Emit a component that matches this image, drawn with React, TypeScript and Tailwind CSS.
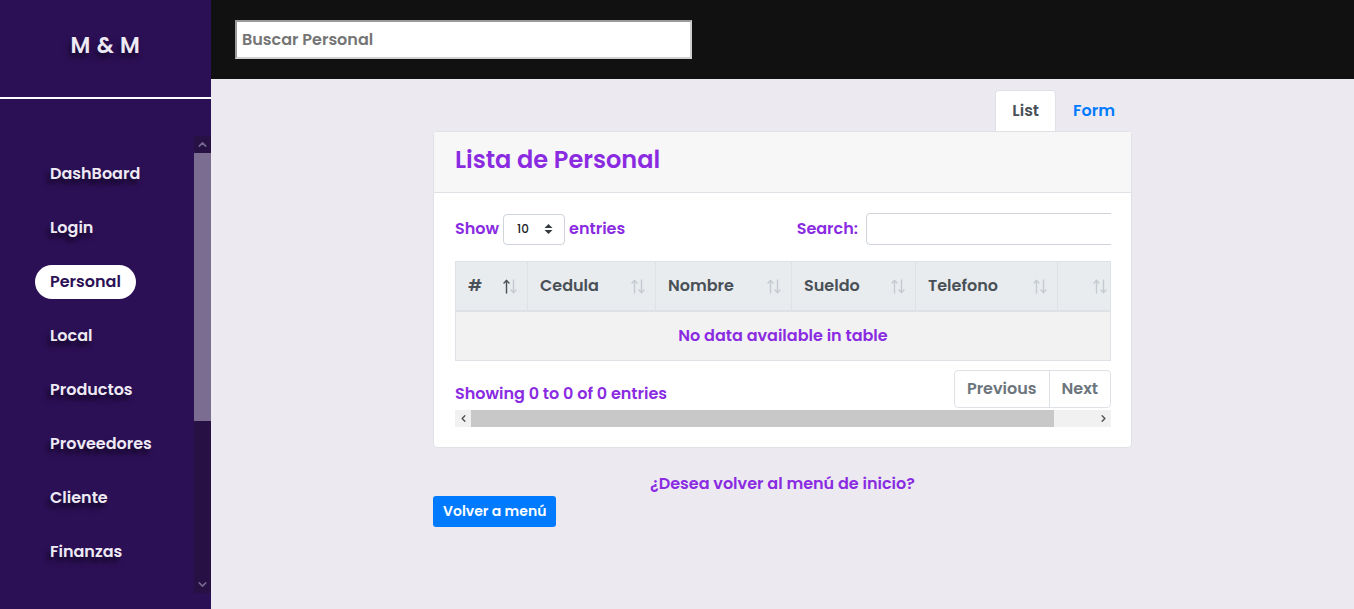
import { ChevronUp, ChevronDown, ChevronLeft, ChevronRight } from "lucide-react"

const font = "font-['Poppins','Open_Sans',sans-serif]"

const navItems = ["DashBoard", "Login", "Personal", "Local", "Productos", "Proveedores", "Cliente", "Finanzas"]

const columns = [
    { label: "#", w: "w-[72px]", active: true },
    { label: "Cedula", w: "w-[128px]" },
    { label: "Nombre", w: "w-[136px]" },
    { label: "Sueldo", w: "w-[124px]" },
    { label: "Telefono", w: "w-[142px]" },
    { label: "", w: "w-[60px]" },
]

// datatables style sort arrows
const SortIcon = ({ active }: { active?: boolean }) => (
    <svg width="14" height="15" viewBox="0 0 14 15" fill="none" strokeWidth="1.4" strokeLinecap="round">
        <g stroke={active ? "#495057" : "#c5cad0"}>
            <path d="M3.5 14V1.5" />
            <path d="M1 4L3.5 1.5L6 4" />
        </g>
        <g stroke="#c5cad0">
            <path d="M10.5 1V13.5" />
            <path d="M8 11L10.5 13.5L13 11" />
        </g>
    </svg>
)

const Sidebar = () => (
    <aside className="flex w-[211px] shrink-0 flex-col bg-[#2c1056]">
        <div className="flex h-[97px] items-center justify-center pb-[6px]">
            <span className="text-[22px] font-semibold tracking-wide text-[#eeeaf4] [text-shadow:-2px_5px_6px_rgba(0,0,0,0.55)]">
                M &amp; M
            </span>
        </div>
        <div className="h-[2px] bg-white" />
        <div className="flex flex-1 pt-[37px] pb-[16px]">
            <ul className="flex flex-1 flex-col gap-[20px] pt-[21px] pl-[35px]">
                {navItems.map((item) => (
                    <li key={item} className="flex h-[34px] items-center">
                        {item === "Personal" ? (
                            <span className="rounded-full bg-white px-[15px] py-[5px] text-[16px] font-semibold text-[#2c1056]">
                                {item}
                            </span>
                        ) : (
                            <span className="px-[15px] text-[16px] font-semibold text-[#eeeaf4] [text-shadow:-3px_5px_5px_rgba(0,0,0,0.6)]">
                                {item}
                            </span>
                        )}
                    </li>
                ))}
            </ul>
            <div className="flex w-[17px] flex-col bg-[#261044]">
                <div className="flex h-[17px] items-center justify-center">
                    <ChevronUp size={13} strokeWidth={3} className="text-[#76678f]" />
                </div>
                <div className="h-[268px] bg-[#7b6c92]" />
                <div className="flex-1" />
                <div className="flex h-[17px] items-center justify-center">
                    <ChevronDown size={13} strokeWidth={3} className="text-[#76678f]" />
                </div>
            </div>
        </div>
    </aside>
)

const DataTable = () => (
    <div className="w-[656px] overflow-hidden">
        <div className="flex items-center justify-between">
            <div className="flex items-center gap-[4px] text-[16px] font-semibold text-[#8a2be2]">
                <span>Show</span>
                <div className="flex h-[31px] w-[62px] items-center justify-between rounded-[4px] border border-[#ced4da] bg-white pl-[13px] pr-[11px] text-[12px] font-medium text-[#212529]">
                    <span>10</span>
                    <svg width="9" height="10" viewBox="0 0 9 10" fill="#343a40">
                        <path d="M4.5 0L8.5 4H0.5Z" />
                        <path d="M4.5 10L8.5 6H0.5Z" />
                    </svg>
                </div>
                <span>entries</span>
            </div>
            <div className="-mr-[30px] flex items-center gap-[8px] text-[16px] font-semibold text-[#8a2be2]">
                <span>Search:</span>
                <div className="h-[32px] w-[275px] rounded-[4px] border border-[#ced4da] bg-white" />
            </div>
        </div>

        <div className="mt-[16px] border border-[#dee2e6]">
            <div className="flex h-[50px] border-b-2 border-[#dee2e6] bg-[#e9ecef]">
                {columns.map((c, i) => (
                    <div
                        key={i}
                        className={`${c.w} flex shrink-0 items-center justify-between border-r border-[#dee2e6] pl-[12px] pr-[10px] text-[16px] font-semibold text-[#495057]`}
                    >
                        <span>{c.label}</span>
                        <SortIcon active={c.active} />
                    </div>
                ))}
            </div>
            <div className="flex h-[48px] items-center justify-center bg-[#f2f2f2] text-[16px] font-semibold text-[#8a2be2]">
                No data available in table
            </div>
        </div>

        <div className="mt-[9px] flex items-end justify-between">
            <span className="pb-[2px] text-[16px] font-semibold text-[#8a2be2]">Showing 0 to 0 of 0 entries</span>
            <div className="flex h-[38px] overflow-hidden rounded-[4px] border border-[#dee2e6] text-[16px] font-semibold text-[#6c757d]">
                <span className="flex items-center border-r border-[#dee2e6] px-[12px]">Previous</span>
                <span className="flex items-center px-[12px]">Next</span>
            </div>
        </div>

        <div className="mt-[2px] flex h-[17px] bg-[#f1f1f1]">
            <div className="flex w-[16px] items-center justify-center">
                <ChevronLeft size={11} strokeWidth={3} className="text-[#505050]" />
            </div>
            <div className="w-[583px] bg-[#c8c8c8]" />
            <div className="flex-1" />
            <div className="flex w-[16px] items-center justify-center">
                <ChevronRight size={11} strokeWidth={3} className="text-[#505050]" />
            </div>
        </div>
    </div>
)

export default function App() {
    return (
        <div className={`flex h-[609px] w-[1354px] overflow-hidden bg-[#ece9f1] ${font}`}>
            <Sidebar />
            <div className="flex flex-1 flex-col">
                <header className="flex h-[79px] items-center bg-[#111111] px-[24px]">
                    <div className="flex h-[39px] w-[457px] items-center border-2 border-[#9a9a9a] border-b-[#d0d0d0] border-r-[#d0d0d0] bg-white px-[5px] text-[16px] font-semibold text-[#757575]">
                        Buscar Personal
                    </div>
                </header>

                <main className="ml-[222px] flex w-[699px] flex-col pt-[11px]">
                    <div className="flex justify-end">
                        <span className="flex h-[41px] items-center rounded-t-[4px] border border-b-0 border-[#dee2e6] bg-white px-[16px] text-[16px] font-semibold text-[#495057]">
                            List
                        </span>
                        <span className="flex h-[41px] items-center px-[17px] text-[16px] font-semibold text-[#007bff]">
                            Form
                        </span>
                    </div>

                    <section className="rounded-[4px] border border-[#dee2e6] bg-white">
                        <div className="flex h-[61px] items-center border-b border-[#dee2e6] bg-[#f7f7f7] px-[21px] pb-[5px]">
                            <h1 className="text-[24px] font-semibold text-[#8a2be2]">Lista de Personal</h1>
                        </div>
                        <div className="px-[21px] pt-[20px] pb-[20px]">
                            <DataTable />
                        </div>
                    </section>

                    <p className="mt-[24px] text-center text-[16px] font-semibold text-[#8a2be2]">
                        ¿Desea volver al menú de inicio?
                    </p>
                    <div>
                        <button className="h-[31px] rounded-[3px] bg-[#007bff] px-[10px] text-[14px] font-semibold text-white">
                            Volver a menú
                        </button>
                    </div>
                </main>
            </div>
        </div>
    )
}
